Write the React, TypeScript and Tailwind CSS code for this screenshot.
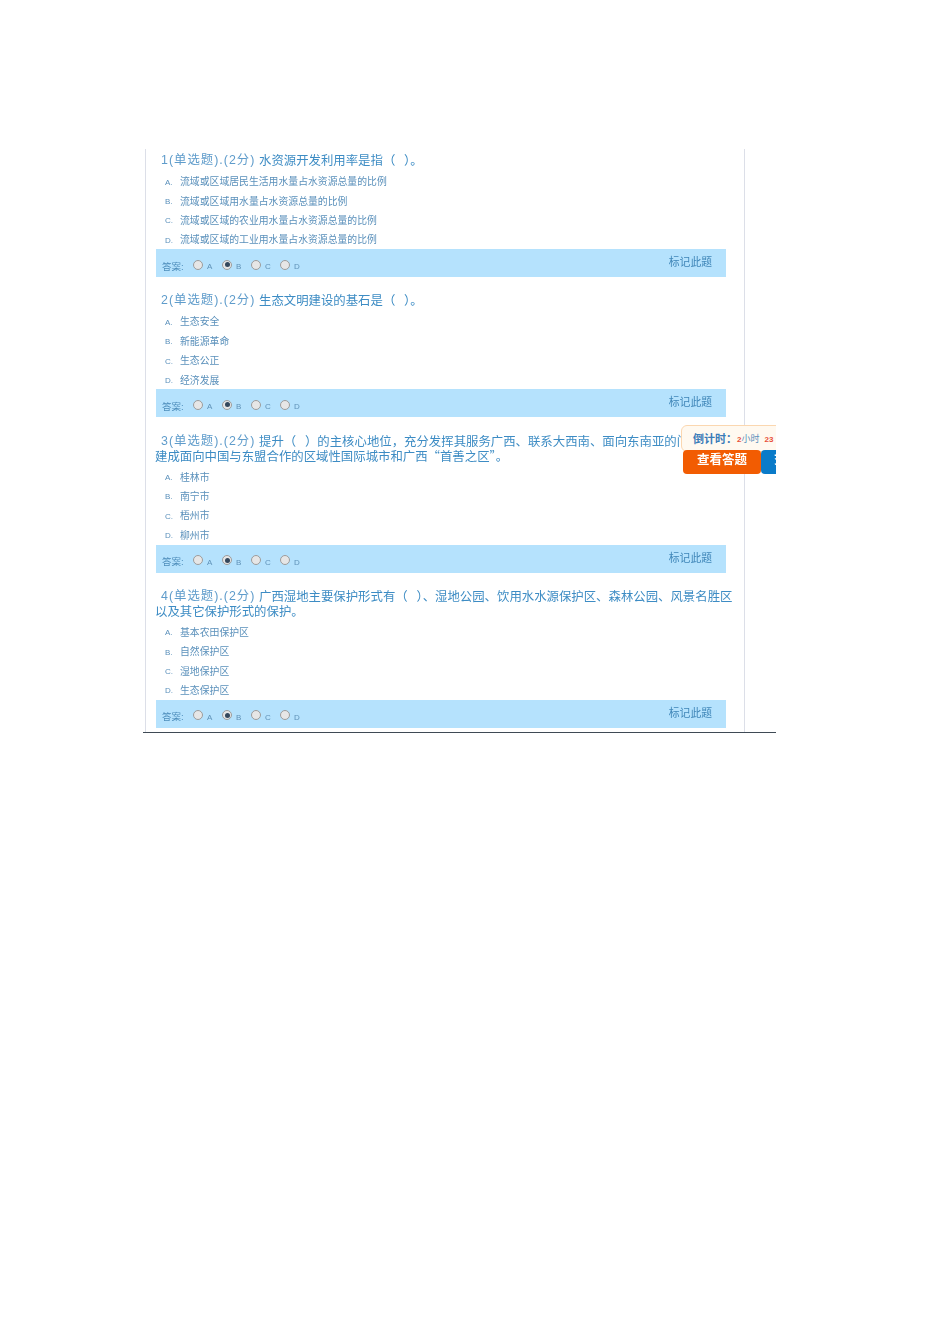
const font = { fontFamily: '"Liberation Sans", "Noto Sans CJK SC", sans-serif' };
const cjk = { fontFamily: '"Noto Sans CJK SC", "Liberation Sans", sans-serif' };

interface Question {
    no: number;
    lines: string[];
    options: string[];
}

const questions: Question[] = [
    {
        no: 1,
        lines: ["水资源开发利用率是指（ ）。"],
        options: ["流域或区域居民生活用水量占水资源总量的比例", "流域或区域用水量占水资源总量的比例", "流域或区域的农业用水量占水资源总量的比例", "流域或区域的工业用水量占水资源总量的比例"],
    },
    {
        no: 2,
        lines: ["生态文明建设的基石是（ ）。"],
        options: ["生态安全", "新能源革命", "生态公正", "经济发展"],
    },
    {
        no: 3,
        lines: ["提升（ ）的主核心地位，充分发挥其服务广西、联系大西南、面向东南亚的门户枢纽作用，", "建成面向中国与东盟合作的区域性国际城市和广西“首善之区”。"],
        options: ["桂林市", "南宁市", "梧州市", "柳州市"],
    },
    {
        no: 4,
        lines: ["广西湿地主要保护形式有（ ）、湿地公园、饮用水水源保护区、森林公园、风景名胜区", "以及其它保护形式的保护。"],
        options: ["基本农田保护区", "自然保护区", "湿地保护区", "生态保护区"],
    },
];

const Radio = ({ label, checked }: { label: string; checked?: boolean }) => (
    <span className="flex items-center w-[29px]">
        <span className="flex items-center justify-center w-[10px] h-[10px] rounded-full border border-[#9c9c9c] bg-[#e6e6e6] -mt-[4px]">
            {checked && <span className="w-[5px] h-[5px] rounded-full bg-[#33475c]" />}
        </span>
        <span className="ml-[4px] mt-[1px] text-[8px] leading-none text-[#5f92b8]">{label}</span>
    </span>
);

const QuestionBlock = ({ q }: { q: Question }) => (
    <div className="mb-[15.9px]">
        <div className="w-[582px] text-[12.4px] text-[#3d8cc4] whitespace-nowrap [word-spacing:6px]" style={cjk}>
            {q.lines.map((line, i) => (
                <div key={i} className="flex items-center h-[15px]">
                    {i === 0 && (
                        <span className="shrink-0 w-[104px] pl-[6px] tracking-[1px] text-[#5f9ccb] [word-spacing:0]" style={font}>
                            {q.no}(单选题).(2分)
                        </span>
                    )}
                    <span>{line}</span>
                </div>
            ))}
        </div>
        <ul className="mt-[5px] pl-[10px]">
            {q.options.map((text, i) => (
                <li key={i} className="flex items-center h-[19.4px] text-[9.85px] text-[#5a90bb]">
                    <span className="w-[15px] text-[8px]">{"ABCD"[i]}.</span>
                    <span>{text}</span>
                </li>
            ))}
        </ul>
        <div className="-mt-[1.3px] flex justify-between w-[570px] h-[28px] ml-[1px] bg-[#b5e2fd] pl-[6px] pr-[14px]">
            <div className="flex items-center pt-[7px]">
                <span className="w-[31px] text-[9.5px] text-[#4d8dbb]">答案:</span>
                <Radio label="A" />
                <Radio label="B" checked />
                <Radio label="C" />
                <Radio label="D" />
            </div>
            <span className="pt-[5px] text-[10.8px] leading-[16px] text-[#3f86b8]">标记此题</span>
        </div>
    </div>
);

const App = () => {
    return (
        <div className="w-[950px] h-[1344px] bg-white pt-[149px] pl-[143px]" style={font}>
            <div className="relative w-[633px] h-[584px] overflow-hidden border-b border-[#3f4a55] blur-[0.3px]">
                <div className="w-[600px] h-full ml-[2px] pl-[9px] pt-[4px] border-x border-[#dcdfe8]">
                    {questions.map(q => (
                        <QuestionBlock key={q.no} q={q} />
                    ))}
                </div>

                {/* floating countdown */}
                <div className="absolute left-[538px] top-[276px] flex items-center w-[110px] h-[27px] pl-[11px] pt-[2px] rounded-[6px] border border-[#fbd7b0] bg-[#fff9f0]">
                    <span className="text-[11px] font-bold text-[#3a7cb8] whitespace-nowrap">倒计时：</span>
                    <span className="text-[8px] font-bold text-[#e8503a]">2</span>
                    <span className="text-[9px] text-[#5a90bb] whitespace-nowrap">小时</span>
                    <span className="ml-[5px] text-[8px] font-bold text-[#e8503a]">23</span>
                </div>
                <div className="absolute left-[540px] top-[301px] flex">
                    <span className="flex items-center justify-center w-[78px] h-[24px] pb-[3px] rounded-[4px] bg-[#f25c02] text-[12.5px] font-bold text-white">查看答题</span>
                    <span className="flex items-center w-[78px] h-[24px] pb-[3px] pl-[13px] rounded-[4px] bg-[#0a7bc9] text-[12.5px] font-bold text-white">交卷</span>
                </div>
            </div>
        </div>
    );
};

export default App;
